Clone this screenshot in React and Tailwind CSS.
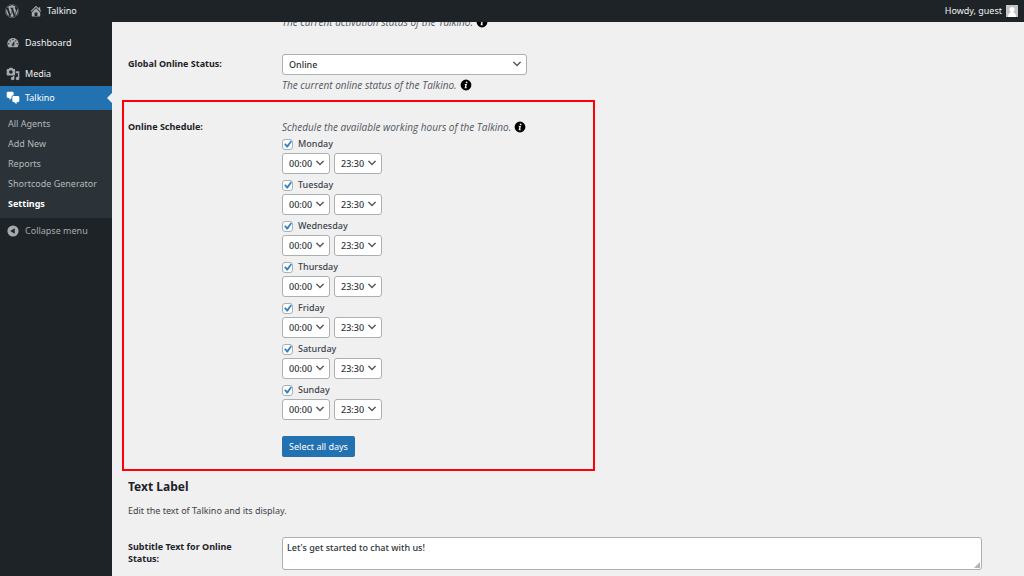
import { useState } from "react";
import { FaWordpress } from "react-icons/fa";

const DAYS = [
  "Monday",
  "Tuesday",
  "Wednesday",
  "Thursday",
  "Friday",
  "Saturday",
  "Sunday",
];

const HOURS = Array.from({ length: 48 }, (_, i) => {
  const hour = String(Math.floor(i / 2)).padStart(2, "0");
  return `${hour}:${i % 2 ? "30" : "00"}`;
});

const SUBMENU = [
  "All Agents",
  "Add New",
  "Reports",
  "Shortcode Generator",
  "Settings",
];

const ICONS = {
  home: "M16 8.5l1.53 1.53-1.06 1.06L10 4.6l-6.47 6.49-1.06-1.06L10 2.5l4 4v-2h2v4zm-6-2.46l6 5.99V18H4v-5.97zM12 17v-5H8v5h4z",
  dashboard:
    "M3.76 16h12.48c1.1-1.37 1.76-3.11 1.76-5 0-4.42-3.58-8-8-8s-8 3.58-8 8c0 1.89.66 3.63 1.76 5zM10 4c.55 0 1 .45 1 1s-.45 1-1 1-1-.45-1-1 .45-1 1-1zM6 6c.55 0 1 .45 1 1s-.45 1-1 1-1-.45-1-1 .45-1 1-1zm8 0c.55 0 1 .45 1 1s-.45 1-1 1-1-.45-1-1 .45-1 1-1zm-5.37 5.55L12 7v6c0 1.1-.9 2-2 2s-2-.9-2-2c0-.57.24-1.08.63-1.45zM4 10c.55 0 1 .45 1 1s-.45 1-1 1-1-.45-1-1 .45-1 1-1zm12 0c.55 0 1 .45 1 1s-.45 1-1 1-1-.45-1-1 .45-1 1-1zm-5 3c0-.55-.45-1-1-1s-1 .45-1 1 .45 1 1 1 1-.45 1-1z",
  media:
    "M13 11V4c0-.55-.45-1-1-1h-1.67L9 1H5L3.67 3H2c-.55 0-1 .45-1 1v7c0 .55.45 1 1 1h10c.55 0 1-.45 1-1zM7 4.5c1.38 0 2.5 1.12 2.5 2.5S8.38 9.5 7 9.5 4.5 8.38 4.5 7 5.62 4.5 7 4.5zM14 6h5v10.5c0 1.38-1.12 2.5-2.5 2.5S14 17.88 14 16.5s1.12-2.5 2.5-2.5c.17 0 .34.02.5.05V9h-3V6zm-4 8.05V13h2v3.5c0 1.38-1.12 2.5-2.5 2.5S7 17.88 7 16.5 8.12 14 9.5 14c.17 0 .34.02.5.05z",
  chat: "M11 6h-.82C9.07 6 8 7.2 8 8.16V10l-3 3v-3H3c-1.1 0-2-.9-2-2V3c0-1.1.9-2 2-2h6c1.1 0 2 .9 2 2v3zm0 1h6c1.1 0 2 .9 2 2v5c0 1.1-.9 2-2 2h-2v3l-3-3h-1c-1.1 0-2-.9-2-2V9c0-1.1.9-2 2-2z",
  collapse: "M10 2a8 8 0 1 0 0 16 8 8 0 0 0 0-16zm2.5 4v8L6 10z",
  info: "M10 1a9 9 0 1 0 0 18 9 9 0 0 0 0-18zm1 3.2a1.5 1.5 0 1 1 0 3 1.5 1.5 0 0 1 0-3zM8 8.5h3.6l-1.2 5.5h1.4l-.3 1.5H7.6l1.2-5.5H7.7z",
  arrow: "M5 6l5 5 5-5 2 1-7 7-7-7 2-1z",
  check: "M15 3.9l1.9 1.4-6.4 9.4H8.7L4.8 9.8l1.9-1.7 2.8 2.8z",
  grip: "M20 0v20H0z",
};

const Icon = ({ name, className }) => (
  <svg
    viewBox="0 0 20 20"
    fill="currentColor"
    fillRule="evenodd"
    aria-hidden="true"
    className={className}
  >
    <path d={ICONS[name]} />
  </svg>
);

const MenuItem = ({ icon, children }) => (
  <a href="#" className="flex h-6 items-center gap-1 pl-1.5 text-[#f0f0f1]">
    <Icon name={icon} className="size-3.5 text-[#a7aaad]" />
    <span className="pl-px">{children}</span>
  </a>
);

const Help = ({ children }) => (
  <p className="flex h-3.5 items-center gap-[3px] font-['Open_Sans','Noto_Sans',sans-serif] text-[10px] italic text-[#50575e]">
    {children}
    <Icon name="info" className="size-3 text-black" />
  </p>
);

const Select = ({ className, options, ...props }) => (
  <span className={`relative flex ${className}`}>
    <select
      className="h-[21px] w-full appearance-none rounded-[3px] border border-[#acafb2] bg-white pl-1.5 text-[9px] font-medium text-[#2c3338]"
      {...props}
    >
      {options.map((option) => (
        <option key={option}>{option}</option>
      ))}
    </select>
    <Icon
      name="arrow"
      className="pointer-events-none absolute right-1 top-1 size-3 text-[#50575e]"
    />
  </span>
);

const Day = ({ day, checked, onToggle }) => (
  <li>
    <label className="flex h-4 items-center gap-1 font-medium">
      <span className="relative flex">
        <input
          type="checkbox"
          checked={checked}
          onChange={onToggle}
          className="size-[11px] appearance-none rounded-[3px] border border-[#acafb2] bg-white"
        />
        {checked && (
          <Icon
            name="check"
            className="pointer-events-none absolute -left-px -top-px size-[13px] text-[#2c84c8]"
          />
        )}
      </span>
      <span className="pl-px">{day}</span>
    </label>
    <div className="mt-px flex gap-1">
      <Select
        className="w-12"
        options={HOURS}
        defaultValue="00:00"
        aria-label={`${day} start time`}
      />
      <Select
        className="w-12"
        options={HOURS}
        defaultValue="23:30"
        aria-label={`${day} end time`}
      />
    </div>
  </li>
);

const App = () => {
  const [days, setDays] = useState(DAYS);

  const toggleDay = (day) => {
    setDays(
      days.includes(day) ? days.filter((d) => d !== day) : [...days, day]
    );
  };

  return (
    <div className="flex h-screen flex-col overflow-hidden bg-[#f0f0f1] font-['Noto_Sans',sans-serif] text-[9px] leading-3 text-[#3c434a]">
      <header className="z-10 flex h-[22px] shrink-0 items-center justify-between bg-[#1d2327] pl-[5px] pr-1.5 text-[#f0f0f1]">
        <div className="flex items-center gap-2.5">
          <a href="#" aria-label="About WordPress">
            <FaWordpress className="size-3.5 text-[#a7aaad]" />
          </a>
          <a href="#" className="flex items-center gap-1">
            <Icon name="home" className="size-3.5 text-[#a7aaad]" />
            Talkino
          </a>
        </div>
        <a href="#" className="flex items-center gap-1">
          Howdy, guest
          <svg viewBox="0 0 12 12" className="size-3" aria-hidden="true">
            <path fill="#c3c4c7" d="M0 0h12v12H0z" />
            <circle cx="6" cy="4.5" r="2.5" fill="#fff" />
            <path fill="#fff" d="M2 12c0-3 1.5-5 4-5s4 2 4 5z" />
          </svg>
        </a>
      </header>

      <div className="flex min-h-0 flex-1">
        <nav className="w-28 shrink-0 bg-[#1d2327] pt-[9px]">
          <MenuItem icon="dashboard">Dashboard</MenuItem>
          <div className="h-[7px]" />
          <MenuItem icon="media">Media</MenuItem>
          <a
            href="#"
            className="relative flex h-6 items-center gap-1 bg-[#2271b1] pl-1.5 text-white"
          >
            <Icon name="chat" className="size-3.5" />
            <span className="pl-px">Talkino</span>
            <span className="absolute right-0 top-[7px] border-y-[5px] border-r-[5px] border-y-transparent border-r-[#f0f0f1]" />
          </a>
          <ul className="bg-[#2c3338] py-1">
            {SUBMENU.map((item) => (
              <li key={item}>
                <a
                  href="#"
                  className={`flex h-5 items-center whitespace-nowrap pl-2 ${
                    item === "Settings"
                      ? "font-bold text-white"
                      : "text-[#b5b8ba]"
                  }`}
                >
                  {item}
                </a>
              </li>
            ))}
          </ul>
          <button
            type="button"
            className="mt-px flex h-6 items-center gap-1 pl-1.5 text-[#a7aaad]"
          >
            <Icon name="collapse" className="size-3.5" />
            <span className="pl-px">Collapse menu</span>
          </button>
        </nav>

        <main className="-mt-[7px] min-w-0 flex-1 pl-2.5">
          <div className="pl-40">
            <Help>The current activation status of the Talkino.</Help>
          </div>

          <div className="mt-[25px] flex pl-1.5">
            <label
              htmlFor="online-status"
              className="w-[154px] pt-1 font-bold text-[#1d2327]"
            >
              Global Online Status:
            </label>
            <div>
              <Select
                id="online-status"
                className="w-[245px]"
                options={["Online", "Away", "Offline"]}
              />
              <div className="mt-[3px]">
                <Help>The current online status of the Talkino.</Help>
              </div>
            </div>
          </div>

          <section className="mt-2 flex w-[473px] border-2 border-[#ff0008] pb-3 pl-1 pt-[18px]">
            <h3 className="w-[154px] pt-px font-bold text-[#1d2327]">
              Online Schedule:
            </h3>
            <div>
              <Help>
                Schedule the available working hours of the Talkino.
              </Help>
              <ul className="mt-0.5 flex flex-col gap-[3px]">
                {DAYS.map((day) => (
                  <Day
                    key={day}
                    day={day}
                    checked={days.includes(day)}
                    onToggle={() => toggleDay(day)}
                  />
                ))}
              </ul>
              <button
                type="button"
                onClick={() => setDays(DAYS)}
                className="mt-4 h-[21px] w-[73px] rounded-xs bg-[#2271b1] text-white"
              >
                Select all days
              </button>
            </div>
          </section>

          <section className="pl-1.5 pt-2">
            <h2 className="text-xs leading-4 font-bold text-[#1d2327]">
              Text Label
            </h2>
            <p className="mt-2.5">Edit the text of Talkino and its display.</p>
            <div className="mt-5 flex pr-[42px]">
              <label
                htmlFor="subtitle"
                className="w-[154px] shrink-0 pr-8 pt-1 font-bold text-[#1d2327]"
              >
                Subtitle Text for Online Status:
              </label>
              <div className="relative flex flex-1">
                <textarea
                  id="subtitle"
                  defaultValue="Let's get started to chat with us!"
                  className="h-[33px] w-full resize-none rounded-[3px] border border-[#acafb2] bg-white px-1 pt-1 font-medium text-[#2c3338]"
                />
                <Icon
                  name="grip"
                  className="pointer-events-none absolute bottom-0.5 right-0.5 size-1.5 text-[#b4b4b4]"
                />
              </div>
            </div>
          </section>
        </main>
      </div>
    </div>
  );
};

export default App;
